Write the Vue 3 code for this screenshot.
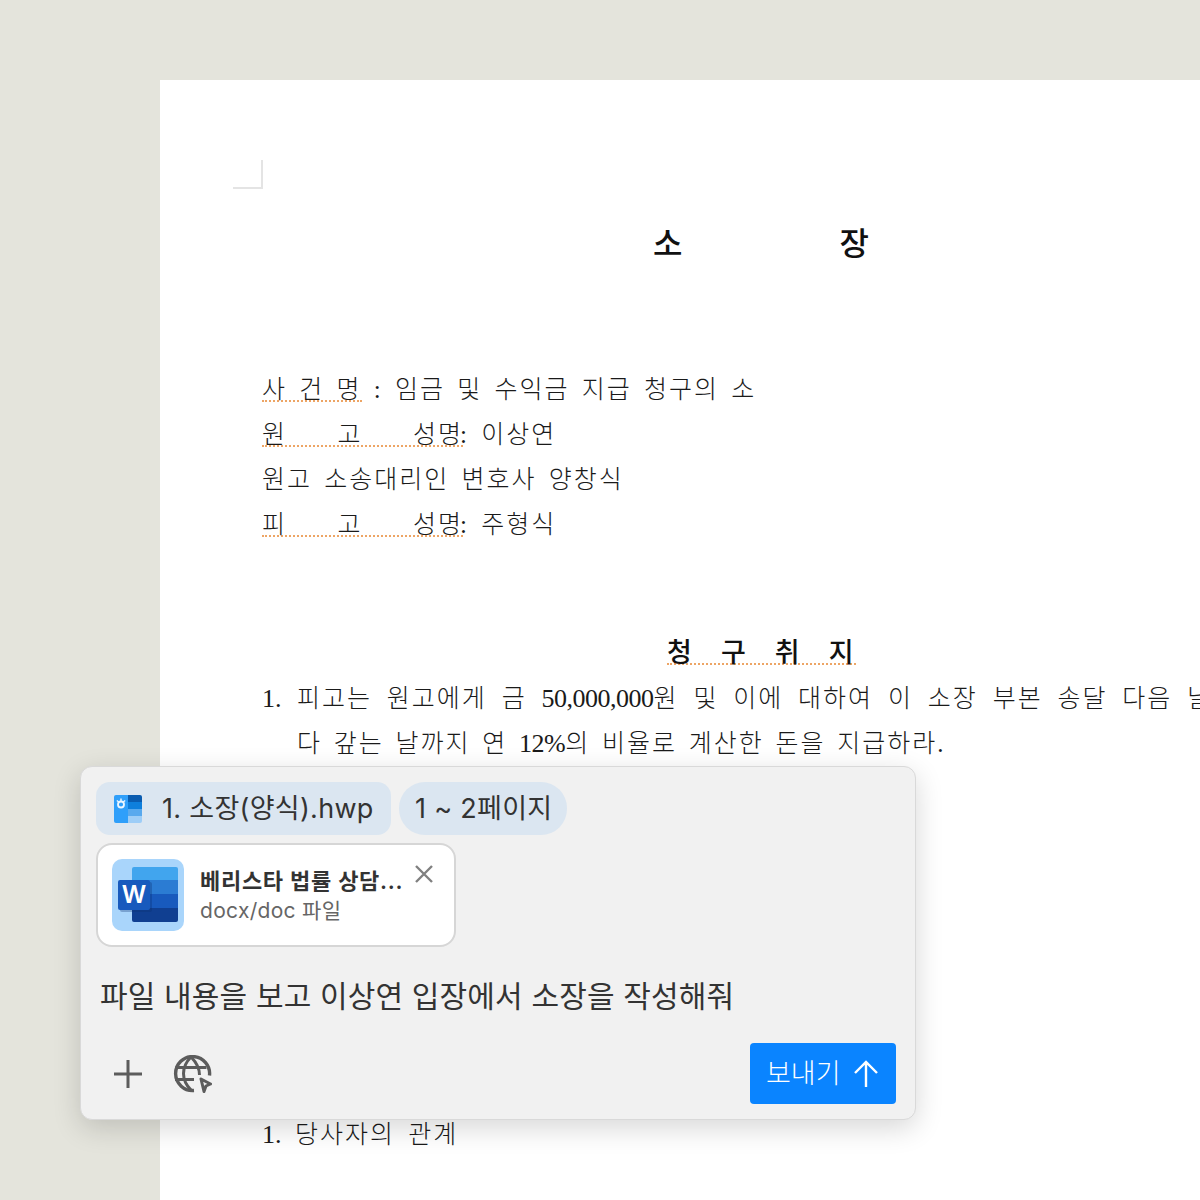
<template>
  <div class="page">
    <section class="paper">
      <div class="crop-mark"></div>
      <h1 class="doc-title"><span>소</span><span>장</span></h1>

      <div class="doc-head">
        <p class="doc-line"><span class="marked">사 건 명</span> : 임금 및 수익금 지급 청구의 소</p>
        <p class="doc-line"><span class="marked wide"><span>원</span><span>고</span><span>성명</span></span>: 이상연</p>
        <p class="doc-line">원고 소송대리인 변호사 양창식</p>
        <p class="doc-line"><span class="marked wide"><span>피</span><span>고</span><span>성명</span></span>: 주형식</p>
      </div>

      <h2 class="doc-subtitle"><span class="marked">청 구 취 지</span></h2>
      <p class="doc-line item"><span class="num">1.</span>피고는 원고에게 금 <span class="latin">50,000,000</span>원 및 이에 대하여 이 소장 부본 송달 다음 날</p>
      <p class="doc-line cont">다 갚는 날까지 연 <span class="latin">12%</span>의 비율로 계산한 돈을 지급하라.</p>
      <p class="doc-line last"><span class="num short">1.</span>당사자의 관계</p>
    </section>

    <div class="composer">
      <div class="chips">
        <div class="chip file">
          <svg class="hwp-icon" width="28" height="28" viewBox="0 0 28 28">
            <path d="M2 0h12v28H2a2 2 0 0 1-2-2V2a2 2 0 0 1 2-2z" fill="#2f9ffa" />
            <path d="M14 0h12a2 2 0 0 1 2 2v5H14z" fill="#0a5cb0" />
            <rect x="14" y="7" width="14" height="7" fill="#0e7fdc" />
            <rect x="14" y="14" width="14" height="7" fill="#58a9ee" />
            <path d="M14 21h14v5a2 2 0 0 1-2 2H14z" fill="#9dcdf7" />
            <circle cx="7" cy="9.500" r="3" fill="none" stroke="#eef7ff" stroke-width="1.800" />
            <path d="M7 3.500v2.500M2.800 5.500l2 1.500M11.200 5.500l-2 1.500" stroke="#eef7ff" stroke-width="1.400" />
          </svg>
          <span class="chip-label">1. 소장(양식).hwp</span>
        </div>
        <div class="chip pages"><span class="chip-label">1 ~ 2페이지</span></div>
      </div>

      <div class="attachment">
        <svg class="word-icon" width="72" height="72" viewBox="0 0 72 72">
          <rect width="72" height="72" rx="10" fill="#a9d5fb" />
          <path d="M22 8h42a2 2 0 0 1 2 2v11H20V10a2 2 0 0 1 2-2z" fill="#41a5ee" />
          <rect x="20" y="21" width="46" height="14" fill="#2b7cd3" />
          <rect x="20" y="35" width="46" height="14" fill="#185abd" />
          <path d="M20 49h46v12a2 2 0 0 1-2 2H22a2 2 0 0 1-2-2z" fill="#103f91" />
          <rect x="8" y="23" width="32" height="30" rx="2" fill="#0b2f6d" opacity=".3" />
          <rect x="6" y="21" width="32" height="30" rx="2" fill="#185abd" />
          <text x="22" y="44" class="word-letter">W</text>
        </svg>
        <div class="attachment-text">
          <div class="attachment-name">베리스타 법률 상담...</div>
          <div class="attachment-type">docx/doc 파일</div>
        </div>
        <svg class="close-icon" width="20" height="20" viewBox="0 0 20 20">
          <path d="M2 2l16 16M18 2L2 18" stroke="#808080" stroke-width="2.4" fill="none" />
        </svg>
      </div>

      <p class="prompt">파일 내용을 보고 이상연 입장에서 소장을 작성해줘</p>

      <div class="footer">
        <svg class="plus-icon" width="30" height="30" viewBox="0 0 30 30">
          <path d="M15 1v28M1 15h28" stroke="#5c5c5c" stroke-width="3" fill="none" />
        </svg>
        <svg class="globe-icon" width="40" height="38" viewBox="0 0 40 38">
          <path d="M22 35.500a17 17 0 1 1 15.500-15" fill="none" stroke="#5c5c5c" stroke-width="3.400" />
          <path d="M19 2c-10 10-10 23 0 33M19 2c6 6 8.500 12 8.500 18" fill="none" stroke="#5c5c5c" stroke-width="3" />
          <path d="M3.500 12.500h31M3 24.500h19" fill="none" stroke="#5c5c5c" stroke-width="3" />
          <path d="M29 24l9.500 5-4.500 2-2 5.500z" fill="none" stroke="#5c5c5c" stroke-width="3" stroke-linejoin="round" />
        </svg>
        <button class="send-btn">
          <span class="send-label">보내기</span>
          <svg width="24" height="28" viewBox="1 0 24 28">
            <path d="M13 27V2M2 13L13 2l11 11" stroke="#fff" stroke-width="2.400" fill="none" />
          </svg>
        </button>
      </div>
    </div>
  </div>
</template>

<script setup>
</script>

<style>
html, body {
  margin: 0;
  background: #e4e4dc;
}
</style>

<style scoped>
.page {
  position: relative;
  width: 1200px;
  height: 1200px;
  overflow: hidden;
  box-sizing: border-box;
  padding: 80px 0 0 160px;
  background: #e4e4dc;
  font-family: "Inter", "Noto Sans CJK KR", sans-serif;
}

.paper {
  height: 1120px;
  box-sizing: border-box;
  padding: 80px 0 0 102px;
  background: #fff;
  color: #1a1a1a;
  font-family: "Liberation Serif", "Noto Sans CJK KR", serif;
  overflow: hidden;
}

.crop-mark {
  width: 28px;
  height: 27px;
  margin-left: -29px;
  border-right: 2px solid #e4e4e4;
  border-bottom: 2px solid #e4e4e4;
}

.doc-title {
  display: flex;
  justify-content: space-between;
  width: 216px;
  margin: 29px 0 0 391px;
  font: 500 32px/46px "Noto Sans CJK KR", sans-serif;
  color: #111;
}

.doc-head {
  margin-top: 103px;
}

.doc-line {
  margin: 0;
  height: 45px;
  font-size: 25px;
  font-weight: 300;
  line-height: 45px;
  letter-spacing: 2px;
  word-spacing: 4px;
  white-space: nowrap;
}

.marked {
  display: inline-block;
  height: 33px;
  line-height: 45px;
  border-bottom: 2px dotted #eda565;
}

.wide {
  display: inline-flex;
  justify-content: space-between;
  width: 201px;
  margin-right: -3px;
}

.doc-subtitle {
  margin: 81px 0 3px 405px;
  font: 500 27px/45px "Noto Sans CJK KR", sans-serif;
  color: #111;
  letter-spacing: 2px;
  word-spacing: 19px;
  white-space: nowrap;
}

.doc-subtitle .marked {
  height: 35px;
}

.item {
  word-spacing: 6.6px;
}

.num {
  display: inline-block;
  width: 35px;
  font-size: 26px;
  letter-spacing: 0;
  word-spacing: 0;
}

.short {
  width: 33px;
}

.latin {
  font-size: 26px;
  letter-spacing: -0.5px;
}

.cont {
  padding-left: 35px;
  word-spacing: 3.5px;
}

.last {
  margin-top: 346px;
  word-spacing: 5px;
}

.composer {
  position: absolute;
  left: 80px;
  top: 766px;
  width: 836px;
  height: 354px;
  box-sizing: border-box;
  display: flex;
  flex-direction: column;
  padding: 15px 19px 15px 15px;
  background: #f1f1f1;
  border: 1px solid #d9d9d9;
  border-radius: 12px;
  box-shadow: 0 8px 28px rgba(0, 0, 0, 0.16);
}

.chips {
  display: flex;
  gap: 8px;
}

.chip {
  display: flex;
  align-items: center;
  height: 53px;
  box-sizing: border-box;
  background: #dbe6f1;
  color: #333;
  font-size: 27px;
  white-space: nowrap;
}

.chip-label {
  margin-bottom: 4px;
  letter-spacing: 0.3px;
}

.file {
  width: 295px;
  padding-left: 18px;
  border-radius: 14px;
  gap: 20px;
}

.pages {
  width: 168px;
  padding-left: 16px;
  border-radius: 26px;
}

.attachment {
  position: relative;
  display: flex;
  align-items: center;
  gap: 16px;
  width: 360px;
  height: 104px;
  box-sizing: border-box;
  margin-top: 8px;
  padding-left: 14px;
  background: #fff;
  border: 2px solid #d6d6d6;
  border-radius: 16px;
}

.word-letter {
  font: 600 24px "Inter", sans-serif;
  fill: #fff;
  text-anchor: middle;
}

.attachment-text {
  padding-top: 2px;
}

.attachment-name {
  font-size: 22px;
  font-weight: 600;
  line-height: 30px;
  letter-spacing: 0.7px;
  color: #333;
  white-space: nowrap;
}

.attachment-type {
  font-size: 21px;
  line-height: 30px;
  letter-spacing: 0.3px;
  color: #666;
  white-space: nowrap;
}

.close-icon {
  position: absolute;
  top: 19px;
  right: 20px;
}

.prompt {
  margin: 27px 0 0 4px;
  font-size: 30px;
  line-height: 44px;
  letter-spacing: 0.15px;
  color: #333;
  white-space: nowrap;
}

.footer {
  display: flex;
  align-items: center;
  margin-top: auto;
  padding-left: 17px;
  height: 61px;
}

.globe-icon {
  margin-left: 29px;
}

.send-btn {
  display: flex;
  align-items: center;
  gap: 13px;
  width: 146px;
  height: 61px;
  box-sizing: border-box;
  margin-left: auto;
  padding: 0 0 0 16px;
  border: none;
  border-radius: 4px;
  background: #0a84ff;
  color: #fff;
  font: 300 27px "Inter", "Noto Sans CJK KR", sans-serif;
}

.send-label {
  margin-bottom: 4px;
}
</style>
